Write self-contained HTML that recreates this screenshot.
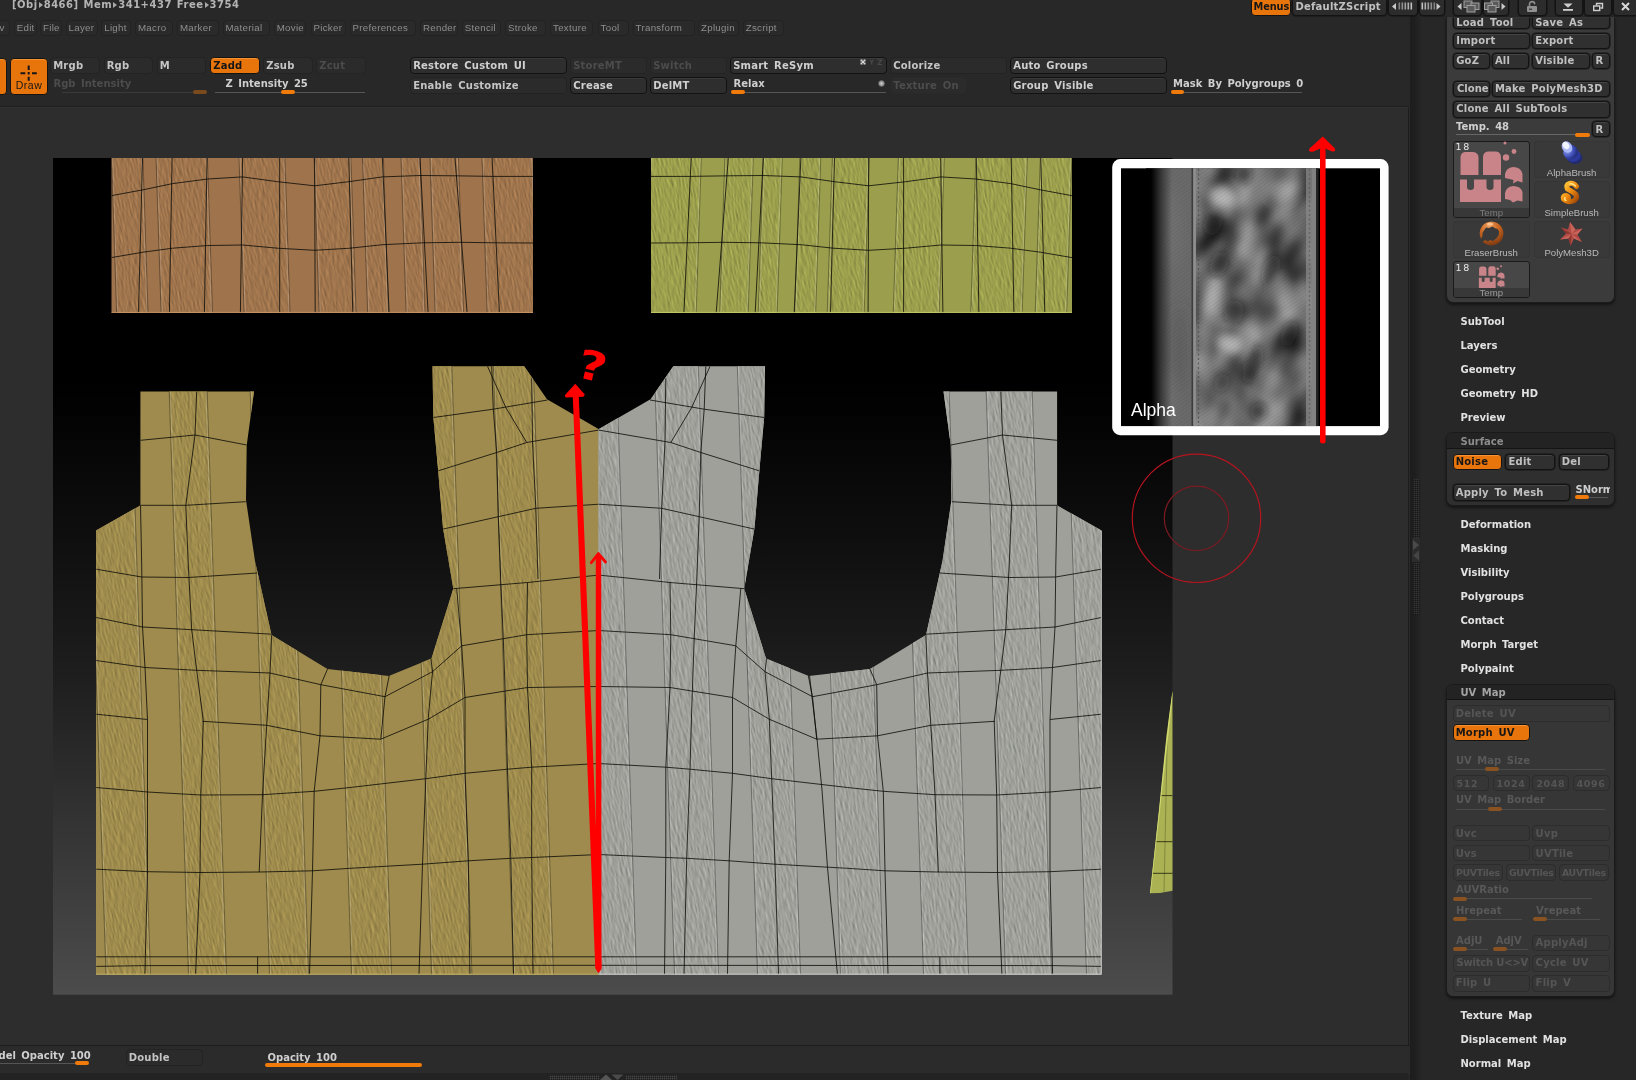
<!DOCTYPE html>
<html lang="en"><head><meta charset="utf-8"><title>ZBrush</title>
<style>
*{box-sizing:border-box;margin:0;padding:0}
html,body{width:1636px;height:1080px;overflow:hidden;background:#2d2d2d}
body{position:relative;font-family:"DejaVu Sans","Liberation Sans",sans-serif;font-size:10px;font-weight:bold;color:#c4c4c4;word-spacing:2px;-webkit-font-smoothing:antialiased}
#root{position:absolute;left:0;top:0;width:1636px;height:1080px;overflow:hidden;will-change:transform}
.a{position:absolute}
.b{position:absolute;border-radius:4px;white-space:nowrap;overflow:hidden;padding-left:2.2px;letter-spacing:.22px}
.b1{background:#2e2e2e;border:1px solid #121212;box-shadow:inset 0 1px 0 #3a3a3a;color:#cfcfcf}
.b2{background:#2b2b2b;border:1px solid #232323;color:#c4c4c4}
.b3{background:#2b2b2b;border:1px solid #242424;color:#4c4c4c}
.bo{background:#e8740c;border:1px solid #141414;color:#161616;box-shadow:inset 0 1px 0 #f59332}
.p1{background:#303030;border:1px solid #131313;box-shadow:inset 0 1px 0 #444,0 0 0 .8px rgba(12,12,12,.5);color:#c0c0c0}
.pd{background:#363636;border:1px solid #2c2c2c;color:#555}
.m{position:absolute;top:20px;height:16px;line-height:14px;border:1px solid #222;border-radius:4px;background:#2a2a2a;color:#8e8e8e;font-family:"Liberation Sans",sans-serif;font-weight:normal;font-size:9.7px;padding-left:2px;white-space:nowrap;word-spacing:0;letter-spacing:.3px}
.tr{display:inline-block;width:0;height:0;border-left:4.5px solid #a8a8a8;border-top:3.5px solid transparent;border-bottom:3.5px solid transparent;margin:0 1px 0 1px}
.t{position:absolute;white-space:nowrap;line-height:12px}
.sl{position:absolute;height:1px;background:#555}
.th{position:absolute;height:4px;border-radius:2px;background:#f07a0a}
.thd{background:#7a4a1c}
.it{position:absolute;left:1460.5px;color:#e2e2e2;white-space:nowrap;line-height:12px}
.lb{position:absolute;font-family:"Liberation Sans",sans-serif;font-weight:normal;font-size:9.6px;color:#b8b8b8;text-align:center;word-spacing:0;white-space:nowrap;line-height:11px}
</style></head>
<body>
<div id="root">
<div class="a" style="left:0;top:0;width:1636px;height:106px;background:#282828"></div>
<div class="a" style="left:0;top:106px;width:1408px;height:1px;background:#1d1d1d"></div>
<div class="a" style="left:0;top:107px;width:1408px;height:1px;background:#333"></div>
<div class="a" style="left:1408px;top:16px;width:228px;height:1064px;background:#272727"></div>
<div class="a" style="left:1410px;top:16px;width:12px;height:1064px;background:linear-gradient(90deg,#1d1d1d 0,#1e1e1e 35%,#272727 100%)"></div>
<div class="a" style="left:1408px;top:107px;width:1px;height:938px;background:#1d1d1d"></div>
<div class="a" style="left:1409px;top:107px;width:1px;height:938px;background:#2a2a2a"></div>
<div class="a" style="left:0;top:1045px;width:1410px;height:1px;background:#1c1c1c"></div>
<div class="a" style="left:0;top:1046px;width:1410px;height:28px;background:#2b2b2b"></div>
<div class="a" style="left:0;top:1073px;width:1408px;height:7px;background:#232323"></div>
<div class="t" style="left:12px;top:-1.5px;color:#b4b4b4;font-size:10px;letter-spacing:.5px;word-spacing:1px">[Obj<span class="tr"></span>8466] Mem<span class="tr"></span>341+437 Free<span class="tr"></span>3754</div>
<div class="m" style="left:-8px;width:17.5px;padding-left:6.5px">v</div>
<div class="m" style="left:13.7px;width:23.8px">Edit</div>
<div class="m" style="left:40px;width:21.5px">File</div>
<div class="m" style="left:65.5px;width:32.5px">Layer</div>
<div class="m" style="left:101.2px;width:29.999999999999986px">Light</div>
<div class="m" style="left:135px;width:37.69999999999999px">Macro</div>
<div class="m" style="left:177px;width:41.69999999999999px">Marker</div>
<div class="m" style="left:222.5px;width:47.5px">Material</div>
<div class="m" style="left:273.7px;width:32.80000000000001px">Movie</div>
<div class="m" style="left:310.5px;width:35.69999999999999px">Picker</div>
<div class="m" style="left:349.5px;width:66.80000000000001px">Preferences</div>
<div class="m" style="left:420px;width:38px">Render</div>
<div class="m" style="left:461.8px;width:39.5px">Stencil</div>
<div class="m" style="left:505px;width:41.299999999999955px">Stroke</div>
<div class="m" style="left:550px;width:43.200000000000045px">Texture</div>
<div class="m" style="left:597.6px;width:31.299999999999955px">Tool</div>
<div class="m" style="left:632.6px;width:62.10000000000002px">Transform</div>
<div class="m" style="left:698px;width:41px">Zplugin</div>
<div class="m" style="left:742.7px;width:41.299999999999955px">Zscript</div>
<div class="a bo" style="left:-4px;top:57.5px;width:11px;height:37px;border-radius:4px"></div>
<div class="a bo" style="left:10px;top:57.500px;width:38px;height:37.500px;border-radius:4px"></div>
<svg class="a" style="left:10.5px;top:57.5px" width="37" height="37" viewBox="0 0 37 37"><g stroke="#161616" stroke-width="2" fill="none"><path d="M17.700 7.500v4.500M17.700 14v2.600M17.700 18.800v4M9.500 15.300h4.800M16.700 15.300h2M21 15.300h4.800"/></g></svg>
<div class="lb" style="left:10.5px;top:79.5px;width:37px;color:#161616;font-size:10.500px;letter-spacing:.5px">Draw</div>
<div class="b b2" style="left:50px;top:57px;width:50.0px;height:17.0px;line-height:15.4px;">Mrgb</div>
<div class="b b2" style="left:103.5px;top:57px;width:49.5px;height:17.0px;line-height:15.4px;">Rgb</div>
<div class="b b2" style="left:156.5px;top:57px;width:49.5px;height:17.0px;line-height:15.4px;">M</div>
<div class="b bo" style="left:210px;top:57px;width:50.0px;height:17.0px;line-height:15.4px;">Zadd</div>
<div class="b b2" style="left:263px;top:57px;width:50.0px;height:17.0px;line-height:15.4px;">Zsub</div>
<div class="b b3" style="left:316px;top:57px;width:50.0px;height:17.0px;line-height:15.4px;">Zcut</div>
<div class="t" style="left:53.5px;top:77.5px;color:#4c4c4c">Rgb Intensity</div>
<div class="sl" style="left:62px;top:91.5px;width:145px;background:#3a3a3a"></div>
<div class="th thd" style="left:193px;top:90px;width:14px"></div>
<div class="t" style="left:225.5px;top:77.5px;color:#cfcfcf">Z Intensity 25</div>
<div class="sl" style="left:215px;top:91.5px;width:150px"></div>
<div class="th" style="left:281px;top:90px;width:14px"></div>
<div class="b b1" style="left:410px;top:57px;width:157.0px;height:17.0px;line-height:15.4px;">Restore Custom UI</div>
<div class="b b2" style="left:410px;top:77px;width:157.0px;height:17.0px;line-height:15.4px;">Enable Customize</div>
<div class="b b3" style="left:570px;top:57px;width:77.0px;height:17.0px;line-height:15.4px;">StoreMT</div>
<div class="b b1" style="left:570px;top:77px;width:77.0px;height:17.0px;line-height:15.4px;">Crease</div>
<div class="b b3" style="left:650px;top:57px;width:77.0px;height:17.0px;line-height:15.4px;">Switch</div>
<div class="b b1" style="left:650px;top:77px;width:77.0px;height:17.0px;line-height:15.4px;">DelMT</div>
<div class="b b1" style="left:730px;top:57px;width:157.0px;height:17.0px;line-height:15.4px;">Smart ReSym</div>
<div class="t" style="left:733.5px;top:77.5px;color:#cfcfcf">Relax</div>
<div class="sl" style="left:731px;top:91.5px;width:155px"></div>
<div class="th" style="left:731px;top:90px;width:14px"></div>
<svg class="a" style="left:860px;top:58.5px" width="24" height="8" viewBox="0 0 24 8"><g fill="#d8d8d8"><rect x="0.5" y="0.5" width="2" height="2"/><rect x="3.5" y="0.5" width="2" height="2"/><rect x="2" y="2" width="2" height="2"/><rect x="0.5" y="3.5" width="2" height="2"/><rect x="3.5" y="3.5" width="2" height="2"/></g><g fill="#4a4a4a"><path d="M9.5 .5h1.2l1 1.8 1-1.8h1.2l-1.6 2.8v2.2h-1.2v-2.2zM17.5 .5h4.5v1l-3 3.4h3v1.1h-4.5v-1l3-3.4h-3z"/></g></svg>
<div class="b b2" style="left:890px;top:57px;width:117.0px;height:17.0px;line-height:15.4px;">Colorize</div>
<div class="a" style="left:877.5px;top:80px;width:7px;height:7px;border-radius:4px;background:radial-gradient(circle,#d0d0d0 0,#909090 45%,#333 75%)"></div>
<div class="b b3" style="left:890px;top:77px;width:77.0px;height:17.0px;line-height:15.4px;border-color:#292929">Texture On</div>
<div class="b b1" style="left:1010px;top:57px;width:157.0px;height:17.0px;line-height:15.4px;">Auto Groups</div>
<div class="b b1" style="left:1010px;top:77px;width:157.0px;height:17.0px;line-height:15.4px;">Group Visible</div>
<div class="t" style="left:1173px;top:77.5px;color:#cfcfcf">Mask By Polygroups 0</div>
<div class="sl" style="left:1172px;top:91.5px;width:130px"></div>
<div class="th" style="left:1171px;top:90px;width:13px"></div>
<div class="b bo" style="left:1250.5px;top:-2px;width:40.0px;height:18.0px;line-height:16.4px;padding-left:2px;border-radius:4px;letter-spacing:-.1px;font-size:9.800px">Menus</div>
<div class="b p1" style="left:1292px;top:-2px;width:94.5px;height:17.5px;line-height:15.9px;padding-left:2.5px;background:#2c2c2c">DefaultZScript</div>
<div class="a p1" style="left:1388px;top:-3px;width:29.5px;height:18.5px;border-radius:4px;background:#2c2c2c"></div>
<div class="a p1" style="left:1418.5px;top:-3px;width:26.0px;height:18.5px;border-radius:4px;background:#2c2c2c"></div>
<div class="a p1" style="left:1453px;top:-3px;width:29px;height:18.5px;border-radius:4px;background:#2c2c2c"></div>
<div class="a p1" style="left:1483px;top:-3px;width:26px;height:18.5px;border-radius:4px;background:#2c2c2c"></div>
<div class="a p1" style="left:1518px;top:-3px;width:28.5px;height:18.5px;border-radius:4px;background:#2c2c2c"></div>
<div class="a p1" style="left:1555px;top:-3px;width:27.5px;height:18.5px;border-radius:4px;background:#2c2c2c"></div>
<div class="a p1" style="left:1583.5px;top:-3px;width:28.0px;height:18.5px;border-radius:4px;background:#2c2c2c"></div>
<div class="a p1" style="left:1612.5px;top:-3px;width:27.5px;height:18.5px;border-radius:4px;background:#2c2c2c"></div>
<svg class="a" style="left:1388px;top:0" width="248" height="16" viewBox="1388 0 248 16"><g fill="#c8c8c8"><path d="M1392 6.5l4-3.5v7z"/><rect x="1398.5" y="2.5" width="1.6" height="7" opacity="0.55"/><rect x="1401.5" y="2.5" width="1.6" height="7" opacity="0.65"/><rect x="1404.5" y="2.5" width="1.6" height="7" opacity="0.75"/><rect x="1407.5" y="2.5" width="1.6" height="7" opacity="0.8500000000000001"/><rect x="1410.5" y="2.5" width="1.6" height="7" opacity="0.9500000000000001"/><rect x="1421.5" y="2.5" width="1.6" height="7" opacity="0.95"/><rect x="1424.5" y="2.5" width="1.6" height="7" opacity="0.85"/><rect x="1427.5" y="2.5" width="1.6" height="7" opacity="0.75"/><rect x="1430.5" y="2.5" width="1.6" height="7" opacity="0.6499999999999999"/><rect x="1433.5" y="2.5" width="1.6" height="7" opacity="0.5499999999999999"/><path d="M1440.5 6.5l-4-3.5v7z"/><path d="M1457.5 6.5l4-3.5v7z"/><path d="M1505.5 6.5l-4-3.5v7z"/></g><g fill="#5a5a5a" stroke="#a0a0a0" stroke-width="1"><rect x="1464" y="1" width="8" height="6.5"/><rect x="1471" y="3" width="8" height="6.5"/><rect x="1467" y="5.5" width="8" height="6.5"/><rect x="1491" y="1" width="8" height="6.5"/><rect x="1484.5" y="3" width="8" height="6.5"/><rect x="1488" y="5.5" width="8" height="6.5"/></g><path d="M1529.5 6V4.2a2.6 2.6 0 0 1 5.2 0" fill="none" stroke="#8c8c8c" stroke-width="1.600"/><rect x="1527" y="6" width="10" height="6" rx="1" fill="#909090"/><rect x="1529" y="8.500" width="3" height="1.500" fill="#444"/><path d="M1563.5 3.5h9l-4.5 4.2z" fill="#cfcfcf"/><rect x="1563" y="9" width="10" height="1.8" fill="#cfcfcf"/><g fill="none" stroke="#cfcfcf" stroke-width="1.4"><path d="M1596.5 5.5v-2h6v4.5h-2"/><rect x="1593.7" y="6" width="6" height="4.5"/></g><path d="M1622 3l7 7M1629 3l-7 7" stroke="#d8d8d8" stroke-width="2" fill="none"/></svg>
<div class="a" style="left:1412.5px;top:479px;width:7px;height:136px;background:#353535;background-image:repeating-linear-gradient(0deg,rgba(0,0,0,.35) 0 1px,transparent 1px 2px),repeating-linear-gradient(90deg,rgba(0,0,0,.3) 0 1px,transparent 1px 2px)"></div>
<div class="a" style="left:1412px;top:538px;width:8px;height:24px;background:#2c2c2c"></div>
<svg class="a" style="left:1412px;top:538px" width="8" height="24" viewBox="0 0 8 24"><path d="M1 2l6 5-6 5z" fill="#4a4a4a"/><path d="M7 12.5l-6 5 6 5z" fill="#444"/></svg>
<div class="a" style="left:1445.700px;top:17px;width:169.800px;height:286px;background:#3b3b3b;border:1px solid #1c1c1c;border-top:none;border-radius:0 0 7px 7px;box-shadow:0 2px 3px rgba(0,0,0,.5)"></div>
<div class="b p1" style="left:1453px;top:12px;width:76.5px;height:17.0px;line-height:15.4px;line-height:19.500px;clip-path:inset(5.500px -2px -2px -2px)">Load Tool</div>
<div class="b p1" style="left:1532px;top:12px;width:77.8px;height:17.0px;line-height:15.4px;line-height:19.500px;clip-path:inset(5.500px -2px -2px -2px)">Save As</div>
<div class="b p1" style="left:1453px;top:32.5px;width:76.5px;height:16.5px;line-height:14.9px;">Import</div>
<div class="b p1" style="left:1532px;top:32.5px;width:77.8px;height:16.5px;line-height:14.9px;">Export</div>
<div class="b p1" style="left:1453px;top:52.5px;width:36.5px;height:16.5px;line-height:14.9px;">GoZ</div>
<div class="b p1" style="left:1491.7px;top:52.5px;width:37.8px;height:16.5px;line-height:14.9px;">All</div>
<div class="b p1" style="left:1532px;top:52.5px;width:57.5px;height:16.5px;line-height:14.9px;">Visible</div>
<div class="b p1" style="left:1592.3px;top:52.5px;width:17.5px;height:16.5px;line-height:14.9px;">R</div>
<div class="b p1" style="left:1453px;top:80.5px;width:36.5px;height:16.5px;line-height:14.9px;padding-left:3px;letter-spacing:0">Clone</div>
<div class="b p1" style="left:1491.7px;top:80.5px;width:118.1px;height:16.5px;line-height:14.9px;">Make PolyMesh3D</div>
<div class="b p1" style="left:1453px;top:101px;width:156.8px;height:16.5px;line-height:14.9px;">Clone All SubTools</div>
<div class="t" style="left:1456px;top:120.5px;color:#cfcfcf">Temp. 48</div>
<div class="sl" style="left:1456px;top:134px;width:134px;background:#666"></div>
<div class="th" style="left:1575px;top:132.5px;width:14.5px"></div>
<div class="b p1" style="left:1592.3px;top:120.5px;width:17.5px;height:16.8px;line-height:15.2px;">R</div>
<div class="a" style="left:1452.5px;top:140.5px;width:77.5px;height:77px;background:#474747;border:1px solid #1a1a1a;border-radius:3px;overflow:hidden"><div class="a" style="left:0;top:66.5px;width:78px;height:11px;background:#383838"></div></div>
<svg class="a" style="left:1452.5px;top:140.5px" width="78" height="68" viewBox="0 0 78 68"><g fill="#c88488"><path d="M7.5 34V16.5q0-5 4.5-5.5h8q5.5 .5 5.5 5.5V34z"/><path d="M30 34V16.5q0-5.5 5-6h8q5 .5 5 6V34z"/><path d="M7 61V38.5h7v7.5q0 3 3.5 3t3.500-3V38.500h12.500V46q0 3 3.500 3t3.500-3V38.500H48V61z"/><circle cx="53" cy="16.500" r="3.200"/><circle cx="61" cy="10.500" r="2.400"/><circle cx="52" cy="2" r="1.500"/><path d="M52 37V33q1-6 8-7 8 0 9.500 7v8.500l-5-1.500-4.500 2.500 .5-3.500z"/><path d="M52 58V52q1-6 8-7 8 0 9.500 6v9.500l-5-1-4.500 2-3-2.500z"/></g></svg>
<div class="t" style="left:1455.5px;top:141px;color:#e8e8e8;font-weight:normal;font-size:9.500px;letter-spacing:1.600px">18</div>
<div class="lb" style="left:1452.5px;top:207px;width:77.5px;color:#7c7c7c">Temp</div>
<div class="a" style="left:1533.5px;top:140.5px;width:76.29999999999995px;height:37.0px;background:#393939;border:1px solid #353535;border-radius:3px"></div>
<div class="lb" style="left:1529.5px;top:166.7px;width:84.29999999999995px">AlphaBrush</div>
<div class="a" style="left:1533.5px;top:180.5px;width:76.29999999999995px;height:37.0px;background:#393939;border:1px solid #353535;border-radius:3px"></div>
<div class="lb" style="left:1529.5px;top:206.7px;width:84.29999999999995px">SimpleBrush</div>
<div class="a" style="left:1452.5px;top:221px;width:77.29999999999995px;height:36.5px;background:#393939;border:1px solid #353535;border-radius:3px"></div>
<div class="lb" style="left:1448.5px;top:246.7px;width:85.29999999999995px">EraserBrush</div>
<div class="a" style="left:1533.5px;top:221px;width:76.29999999999995px;height:36.5px;background:#393939;border:1px solid #353535;border-radius:3px"></div>
<div class="lb" style="left:1529.5px;top:246.7px;width:84.29999999999995px">PolyMesh3D</div>
<svg class="a" style="left:1555px;top:139px" width="32" height="28" viewBox="0 0 32 28"><defs><radialGradient id="ab" cx=".35" cy=".3" r=".8"><stop offset="0" stop-color="#8fa0f0"/><stop offset=".6" stop-color="#3848b0"/><stop offset="1" stop-color="#1c2460"/></radialGradient></defs><ellipse cx="20" cy="19" rx="7.5" ry="6" fill="#222a70"/><ellipse cx="18" cy="16.500" rx="7.500" ry="6.500" fill="#2c389c"/><ellipse cx="15.500" cy="13" rx="7.500" ry="7" fill="url(#ab)" transform="rotate(-30 15.500 13)"/><ellipse cx="12" cy="8" rx="5" ry="6" fill="#aab8f8" transform="rotate(-35 12 8)"/><ellipse cx="11" cy="6.500" rx="3" ry="4" fill="#f0f4ff" transform="rotate(-35 11 6.500)"/></svg>
<svg class="a" style="left:1557px;top:180px" width="28" height="26" viewBox="0 0 28 26"><defs><linearGradient id="sg" x1="0" y1="0" x2="1" y2="1"><stop offset="0" stop-color="#ffd040"/><stop offset=".5" stop-color="#f08c10"/><stop offset="1" stop-color="#a04808"/></linearGradient></defs><path d="M19.500 6.500q-3-4-7-3t-2 5.500q5 2.500 8.500 5.500 2 4-2.500 6.500-6 2-10-2-1-3.500 2.500-3.500 2.500 .5 2.500 2.500" fill="none" stroke="url(#sg)" stroke-width="5" stroke-linecap="round"/><path d="M18.500 6q-3-3-6-2M8 17.500q-1 2 1 3" fill="none" stroke="#ffe890" stroke-width="1.300" stroke-linecap="round"/></svg>
<svg class="a" style="left:1477px;top:220px" width="30" height="28" viewBox="0 0 30 28"><defs><radialGradient id="eg" cx=".4" cy=".2" r=".9"><stop offset="0" stop-color="#f0a060"/><stop offset=".45" stop-color="#c86420"/><stop offset="1" stop-color="#6a3010"/></radialGradient></defs><path d="M14.500 1.500a12 12 0 1 1-9 20l3-1.500 2.500 1.500 2-1.500 3 1 2.500-2q4-3 3.500-7.500-1-3.500-3.500-3l-3-2-3.500 1.500-3-.5-2 3q-2 2-1.500 5.500l-1.500 3A12 12 0 0 1 14.500 1.500z" fill="url(#eg)"/><ellipse cx="13" cy="4" rx="3" ry="1.500" fill="#ffd0a0" opacity=".8"/></svg>
<svg class="a" style="left:1558px;top:221px" width="28" height="26" viewBox="0 0 28 26"><path d="M12 1 L17.5 8.5 L24.5 7.5 L19.5 13.5 L24 21 L16 17.5 L12.5 25 L10.5 17.5 L2 18.5 L8 12.5 L3 6.5 L10 8.5z" fill="#b04a44"/><path d="M12 1L13.500 13 17.500 8.500zM24.500 7.500L13.500 13 19.500 13.500zM24 21L13.500 13 16 17.500zM2 18.500L13.500 13 10.500 17.500z" fill="#d06a60" opacity=".8"/><path d="M12.500 25L13.500 13 10.500 17.500zM3 6.500L13.500 13 8 12.500z" fill="#7a2c28" opacity=".7"/></svg>
<div class="a" style="left:1452.5px;top:261px;width:77.5px;height:36.500px;background:#474747;border:1px solid #1a1a1a;border-radius:3px;overflow:hidden"><div class="a" style="left:0;top:26px;width:78px;height:11px;background:#383838"></div></div>
<svg class="a" style="left:1476px;top:262px" width="32" height="26" viewBox="0 0 78 64" preserveAspectRatio="none"><g fill="#c88488"><path d="M7.500 34V16.500q0-5 4.500-5.500h8q5.500 .5 5.500 5.500V34z"/><path d="M30 34V16.500q0-5.500 5-6h8q5 .5 5 6V34z"/><path d="M7 64V38.500h7v7.500q0 3 3.500 3t3.500-3V38.500h12.500V46q0 3 3.500 3t3.500-3V38.500H48V64z"/><circle cx="53" cy="16.500" r="3.200"/><circle cx="61" cy="10.500" r="2.400"/><path d="M52 37V33q1-6 8-7 8 0 9.500 7v8.500l-5-1.500-4.500 2.500 .5-3.500z"/><path d="M52 58V52q1-6 8-7 8 0 9.500 6v9.500l-5-1-4.500 2-3-2.500z"/></g></svg>
<div class="t" style="left:1455.5px;top:261.500px;color:#e8e8e8;font-weight:normal;font-size:9.500px;letter-spacing:1.600px">18</div>
<div class="lb" style="left:1452.5px;top:287px;width:77.500px;color:#9a9a9a">Temp</div>
<div class="it" style="top:315.9px">SubTool</div>
<div class="it" style="top:340.1px">Layers</div>
<div class="it" style="top:364.1px">Geometry</div>
<div class="it" style="top:388.1px">Geometry HD</div>
<div class="it" style="top:412.0px">Preview</div>
<div class="a" style="left:1445.700px;top:432.300px;width:169.800px;height:74.200px;background:#2f2f2f;border:1px solid #1a1a1a;border-radius:7px;box-shadow:0 2px 3px rgba(0,0,0,.45);overflow:hidden"><div class="a" style="left:0;top:0;width:170px;height:15.500px;background:#232323;border-bottom:1px solid #141414"></div></div>
<div class="it" style="top:436.300px;color:#8c8c8c">Surface</div>
<div class="b bo" style="left:1452.5px;top:454px;width:49.8px;height:16.3px;line-height:14.7px;">Noise</div>
<div class="b p1" style="left:1505.3px;top:454px;width:50.2px;height:16.3px;line-height:14.7px;">Edit</div>
<div class="b p1" style="left:1558.5px;top:454px;width:50.3px;height:16.3px;line-height:14.7px;">Del</div>
<div class="b p1" style="left:1452.5px;top:483.7px;width:117.0px;height:16.9px;line-height:15.3px;">Apply To Mesh</div>
<div class="t" style="left:1575.5px;top:483.500px;color:#cfcfcf;width:34px;overflow:hidden">SNormal</div>
<div class="sl" style="left:1575px;top:497px;width:33px;background:#555"></div>
<div class="th" style="left:1574.500px;top:495.300px;width:14px"></div>
<div class="it" style="top:518.9px">Deformation</div>
<div class="it" style="top:543.0px">Masking</div>
<div class="it" style="top:567.0px">Visibility</div>
<div class="it" style="top:591.0px">Polygroups</div>
<div class="it" style="top:615.0px">Contact</div>
<div class="it" style="top:639.0px">Morph Target</div>
<div class="it" style="top:663.0px">Polypaint</div>
<div class="a" style="left:1445.700px;top:683.500px;width:169.800px;height:313.500px;background:#363636;border:1px solid #1a1a1a;border-radius:7px;box-shadow:0 2px 3px rgba(0,0,0,.45);overflow:hidden"><div class="a" style="left:0;top:0;width:170px;height:15.500px;background:#232323;border-bottom:1px solid #141414"></div></div>
<div class="it" style="top:687.300px;color:#a4a4a4">UV Map</div>
<div class="b pd" style="left:1452.5px;top:704.5px;width:157.3px;height:17.3px;line-height:15.7px;">Delete UV</div>
<div class="b bo" style="left:1452.5px;top:724.4px;width:77.3px;height:17.1px;line-height:15.5px;">Morph UV</div>
<div class="t" style="left:1456px;top:754.5px;color:#585858">UV Map Size</div>
<div class="sl" style="left:1456px;top:768.5px;width:149px;background:#4a4a4a"></div>
<div class="th thd" style="left:1485px;top:766.8px;width:14px;background:#8a5220"></div>
<div class="b pd" style="left:1452.5px;top:774.7px;width:36.8px;height:16.8px;line-height:15.2px;letter-spacing:.6px;padding-left:3px;font-size:9.500px">512</div>
<div class="b pd" style="left:1492.5px;top:774.7px;width:37.0px;height:16.8px;line-height:15.2px;letter-spacing:.6px;padding-left:3px;font-size:9.500px">1024</div>
<div class="b pd" style="left:1532.4px;top:774.7px;width:37.1px;height:16.8px;line-height:15.2px;letter-spacing:.6px;padding-left:3px;font-size:9.500px">2048</div>
<div class="b pd" style="left:1572.5px;top:774.7px;width:37.3px;height:16.8px;line-height:15.2px;letter-spacing:.6px;padding-left:3px;font-size:9.500px">4096</div>
<div class="t" style="left:1456px;top:794.1px;color:#585858">UV Map Border</div>
<div class="sl" style="left:1456px;top:808.5px;width:149px;background:#4a4a4a"></div>
<div class="th thd" style="left:1488px;top:806.8px;width:14px;background:#8a5220"></div>
<div class="b pd" style="left:1452.5px;top:824.6px;width:77.3px;height:16.9px;line-height:15.3px;">Uvc</div>
<div class="b pd" style="left:1532.4px;top:824.6px;width:77.4px;height:16.9px;line-height:15.3px;">Uvp</div>
<div class="b pd" style="left:1452.5px;top:844.6px;width:77.3px;height:16.8px;line-height:15.2px;">Uvs</div>
<div class="b pd" style="left:1532.4px;top:844.6px;width:77.4px;height:16.8px;line-height:15.2px;">UVTile</div>
<div class="b pd" style="left:1452.5px;top:864.4px;width:50.0px;height:16.8px;line-height:15.2px;padding-left:2.500px;letter-spacing:-.35px;font-size:9.400px">PUVTiles</div>
<div class="b pd" style="left:1505.5px;top:864.4px;width:50.0px;height:16.8px;line-height:15.2px;padding-left:2.500px;letter-spacing:-.35px;font-size:9.400px">GUVTiles</div>
<div class="b pd" style="left:1558.5px;top:864.4px;width:50.8px;height:16.8px;line-height:15.2px;padding-left:2.500px;letter-spacing:-.35px;font-size:9.400px">AUVTiles</div>
<div class="t" style="left:1456px;top:884.3px;color:#585858">AUVRatio</div>
<div class="sl" style="left:1454px;top:898.3px;width:138px;background:#4a4a4a"></div>
<div class="th thd" style="left:1452.5px;top:896.5999999999999px;width:14px;background:#8a5220"></div>
<div class="t" style="left:1456px;top:904.5px;color:#585858">Hrepeat</div>
<div class="sl" style="left:1454px;top:918.7px;width:68px;background:#4a4a4a"></div>
<div class="th thd" style="left:1452.5px;top:917.0px;width:14px;background:#8a5220"></div>
<div class="t" style="left:1536px;top:904.5px;color:#585858">Vrepeat</div>
<div class="sl" style="left:1534px;top:918.7px;width:66px;background:#4a4a4a"></div>
<div class="th thd" style="left:1532.8px;top:917.0px;width:14px;background:#8a5220"></div>
<div class="t" style="left:1456px;top:934.5px;color:#585858">AdjU</div>
<div class="sl" style="left:1454px;top:948.6px;width:34px;background:#4a4a4a"></div>
<div class="th thd" style="left:1452.5px;top:946.9px;width:14px;background:#8a5220"></div>
<div class="t" style="left:1495.7px;top:934.5px;color:#585858">AdjV</div>
<div class="sl" style="left:1494px;top:948.6px;width:34px;background:#4a4a4a"></div>
<div class="th thd" style="left:1492.7px;top:946.9px;width:14px;background:#8a5220"></div>
<div class="b pd" style="left:1532.4px;top:935.4px;width:77.4px;height:16.1px;line-height:14.5px;">ApplyAdj</div>
<div class="b pd" style="left:1452.5px;top:955px;width:77.3px;height:16.5px;line-height:14.9px;padding-left:3px;letter-spacing:-.2px;word-spacing:0">Switch U&lt;&gt;V</div>
<div class="b pd" style="left:1532.4px;top:955px;width:77.4px;height:16.5px;line-height:14.9px;">Cycle UV</div>
<div class="b pd" style="left:1452.5px;top:975px;width:77.3px;height:16.5px;line-height:14.9px;">Flip U</div>
<div class="b pd" style="left:1532.4px;top:975px;width:77.4px;height:16.5px;line-height:14.9px;">Flip V</div>
<div class="it" style="top:1010.2px">Texture Map</div>
<div class="it" style="top:1034.1px">Displacement Map</div>
<div class="it" style="top:1058.1px">Normal Map</div>
<svg class="a" style="left:0;top:0" width="1636" height="1080" viewBox="0 0 1636 1080"><defs><linearGradient id="cbg" x1="0" y1="0" x2="0" y2="1"><stop offset="0" stop-color="#000"/><stop offset=".27" stop-color="#000"/><stop offset=".45" stop-color="#0e0e0e"/><stop offset=".62" stop-color="#1e1e1e"/><stop offset=".8" stop-color="#343434"/><stop offset="1" stop-color="#4c4c4c"/></linearGradient><filter id="fbr" filterUnits="userSpaceOnUse" x="-200" y="100" width="1500" height="950" color-interpolation-filters="sRGB"><feTurbulence type="fractalNoise" baseFrequency="0.7 0.09" numOctaves="2" seed="100" result="n"/><feDiffuseLighting in="n" surfaceScale="0.36" diffuseConstant="1" lighting-color="rgb(224,164,108)" result="l"><feDistantLight azimuth="180" elevation="45"/></feDiffuseLighting><feComposite in="l" in2="SourceAlpha" operator="in"/></filter><filter id="fgn" filterUnits="userSpaceOnUse" x="-200" y="100" width="1500" height="950" color-interpolation-filters="sRGB"><feTurbulence type="fractalNoise" baseFrequency="0.7 0.09" numOctaves="2" seed="105" result="n"/><feDiffuseLighting in="n" surfaceScale="0.36" diffuseConstant="1" lighting-color="rgb(219,224,108)" result="l"><feDistantLight azimuth="180" elevation="45"/></feDiffuseLighting><feComposite in="l" in2="SourceAlpha" operator="in"/></filter><filter id="ftn" filterUnits="userSpaceOnUse" x="-200" y="100" width="1500" height="950" color-interpolation-filters="sRGB"><feTurbulence type="fractalNoise" baseFrequency="0.7 0.09" numOctaves="2" seed="118" result="n"/><feDiffuseLighting in="n" surfaceScale="0.36" diffuseConstant="1" lighting-color="rgb(223,196,108)" result="l"><feDistantLight azimuth="180" elevation="45"/></feDiffuseLighting><feComposite in="l" in2="SourceAlpha" operator="in"/></filter><filter id="fgy" filterUnits="userSpaceOnUse" x="-200" y="100" width="1500" height="950" color-interpolation-filters="sRGB"><feTurbulence type="fractalNoise" baseFrequency="0.7 0.09" numOctaves="2" seed="105" result="n"/><feDiffuseLighting in="n" surfaceScale="0.36" diffuseConstant="1" lighting-color="rgb(224,226,217)" result="l"><feDistantLight azimuth="180" elevation="45"/></feDiffuseLighting><feComposite in="l" in2="SourceAlpha" operator="in"/></filter><clipPath id="cl"><polygon points="140.4,391.5 254.0,391.5 246.7,445.5 246.0,500.0 255.0,561.0 271.5,635.0 327.5,669.0 388.8,676.0 431.5,658.5 453.3,588.7 443.0,528.0 438.0,469.0 433.3,417.0 432.5,366.3 524.2,366.3 547.0,399.3 571.7,413.5 599.0,429.2 599.0,974.5 96.0,974.5 96.0,530.5 140.4,505.3"/></clipPath><clipPath id="cr"><polygon points="1057.1,391.5 943.5,391.5 950.8,445.5 951.5,500.0 942.5,561.0 926.0,635.0 870.0,669.0 808.7,676.0 766.0,658.5 744.2,588.7 754.5,528.0 759.5,469.0 764.2,417.0 765.0,366.3 673.3,366.3 650.5,399.3 625.8,413.5 598.5,429.2 598.5,974.5 1101.5,974.5 1101.5,530.5 1057.1,505.3"/></clipPath><clipPath id="cb"><polygon points="111.5,158.0 533.0,158.0 533.0,312.7 111.5,312.7"/></clipPath><clipPath id="cg"><polygon points="651.0,158.0 1072.0,158.0 1072.0,312.7 651.0,312.7"/></clipPath><clipPath id="cs"><polygon points="1172.5,691.0 1166.5,735.0 1159.0,810.0 1150.0,893.3 1160.0,893.0 1172.5,890.8"/></clipPath><clipPath id="ccv"><rect x="53" y="158" width="1119.5" height="836.7"/></clipPath><filter id="bl3" x="-50%" y="-50%" width="200%" height="200%"><feGaussianBlur stdDeviation="5"/></filter><filter id="bl5" x="-50%" y="-50%" width="200%" height="200%"><feGaussianBlur stdDeviation="7"/></filter><linearGradient id="afade" x1="0" y1="0" x2="1" y2="0"><stop offset="0" stop-color="#000" stop-opacity="1"/><stop offset=".2" stop-color="#000" stop-opacity="1"/><stop offset=".6" stop-color="#000" stop-opacity=".45"/><stop offset="1" stop-color="#000" stop-opacity="0"/></linearGradient><pattern id="hat" width="3" height="3" patternUnits="userSpaceOnUse" patternTransform="rotate(-35)"><rect width="3" height="1" fill="#000" opacity=".06"/></pattern><filter id="fal" filterUnits="userSpaceOnUse" x="1000" y="0" width="500" height="700" color-interpolation-filters="sRGB"><feTurbulence type="fractalNoise" baseFrequency="0.034 0.022" numOctaves="2" seed="23" result="n"/><feColorMatrix in="n" type="matrix" values="0.8 0 0 0 0.01  0.8 0 0 0 0.01  0.8 0 0 0 0.01  0 0 0 0 1" result="g"/><feGaussianBlur in="g" stdDeviation="2.2" result="gb"/><feComposite in="gb" in2="SourceAlpha" operator="in"/></filter><clipPath id="cal2"><rect x="1196" y="160" width="116" height="275"/></clipPath><clipPath id="cal"><rect x="1121" y="168.3" width="259" height="257.8"/></clipPath></defs><rect x="53" y="158" width="1119.5" height="836.7" fill="url(#cbg)"/><polygon points="111.5,158.0 533.0,158.0 533.0,312.7 111.5,312.7" fill="rgb(159,116,77)"/><g clip-path="url(#cb)"><g transform="matrix(1 0 0.1944 1 0 0)" filter="url(#fbr)"><polygon points="82.1,150.0 113.6,150.0 -22.0,990.0 -53.5,990.0"/><polygon points="126.6,150.0 178.1,150.0 42.5,990.0 -9.0,990.0"/><polygon points="209.6,150.0 255.6,150.0 120.0,990.0 74.0,990.0"/><polygon points="284.6,150.0 321.6,150.0 186.0,990.0 149.0,990.0"/><polygon points="333.1,150.0 354.1,150.0 218.5,990.0 197.5,990.0"/><polygon points="371.6,150.0 390.6,150.0 255.0,990.0 236.0,990.0"/><polygon points="400.6,150.0 429.1,150.0 293.5,990.0 265.0,990.0"/><polygon points="452.6,150.0 503.6,150.0 368.0,990.0 317.0,990.0"/></g><line x1="111.2" y1="150" x2="139.0" y2="990" stroke="#000" stroke-opacity=".33" stroke-width="1"/><line x1="112.4" y1="150" x2="140.2" y2="990" stroke="#fff" stroke-opacity=".18" stroke-width="1"/><line x1="142.7" y1="150" x2="170.5" y2="990" stroke="#000" stroke-opacity=".3" stroke-width="1"/><line x1="141.5" y1="150" x2="169.3" y2="990" stroke="#fff" stroke-opacity=".2" stroke-width="1"/><line x1="155.7" y1="150" x2="183.5" y2="990" stroke="#000" stroke-opacity=".33" stroke-width="1"/><line x1="156.9" y1="150" x2="184.7" y2="990" stroke="#fff" stroke-opacity=".18" stroke-width="1"/><line x1="207.2" y1="150" x2="235.0" y2="990" stroke="#000" stroke-opacity=".3" stroke-width="1"/><line x1="206.0" y1="150" x2="233.8" y2="990" stroke="#fff" stroke-opacity=".2" stroke-width="1"/><line x1="238.7" y1="150" x2="266.5" y2="990" stroke="#000" stroke-opacity=".33" stroke-width="1"/><line x1="239.9" y1="150" x2="267.7" y2="990" stroke="#fff" stroke-opacity=".18" stroke-width="1"/><line x1="284.7" y1="150" x2="312.5" y2="990" stroke="#000" stroke-opacity=".3" stroke-width="1"/><line x1="283.5" y1="150" x2="311.3" y2="990" stroke="#fff" stroke-opacity=".2" stroke-width="1"/><line x1="313.7" y1="150" x2="341.5" y2="990" stroke="#000" stroke-opacity=".33" stroke-width="1"/><line x1="314.9" y1="150" x2="342.7" y2="990" stroke="#fff" stroke-opacity=".18" stroke-width="1"/><line x1="350.7" y1="150" x2="378.5" y2="990" stroke="#000" stroke-opacity=".3" stroke-width="1"/><line x1="349.5" y1="150" x2="377.3" y2="990" stroke="#fff" stroke-opacity=".2" stroke-width="1"/><line x1="362.2" y1="150" x2="390.0" y2="990" stroke="#000" stroke-opacity=".33" stroke-width="1"/><line x1="363.4" y1="150" x2="391.2" y2="990" stroke="#fff" stroke-opacity=".18" stroke-width="1"/><line x1="383.2" y1="150" x2="411.0" y2="990" stroke="#000" stroke-opacity=".3" stroke-width="1"/><line x1="382.0" y1="150" x2="409.8" y2="990" stroke="#fff" stroke-opacity=".2" stroke-width="1"/><line x1="400.7" y1="150" x2="428.5" y2="990" stroke="#000" stroke-opacity=".33" stroke-width="1"/><line x1="401.9" y1="150" x2="429.7" y2="990" stroke="#fff" stroke-opacity=".18" stroke-width="1"/><line x1="419.7" y1="150" x2="447.5" y2="990" stroke="#000" stroke-opacity=".3" stroke-width="1"/><line x1="418.5" y1="150" x2="446.3" y2="990" stroke="#fff" stroke-opacity=".2" stroke-width="1"/><line x1="429.7" y1="150" x2="457.5" y2="990" stroke="#000" stroke-opacity=".33" stroke-width="1"/><line x1="430.9" y1="150" x2="458.7" y2="990" stroke="#fff" stroke-opacity=".18" stroke-width="1"/><line x1="458.2" y1="150" x2="486.0" y2="990" stroke="#000" stroke-opacity=".3" stroke-width="1"/><line x1="457.0" y1="150" x2="484.8" y2="990" stroke="#fff" stroke-opacity=".2" stroke-width="1"/><line x1="481.7" y1="150" x2="509.5" y2="990" stroke="#000" stroke-opacity=".33" stroke-width="1"/><line x1="482.9" y1="150" x2="510.7" y2="990" stroke="#fff" stroke-opacity=".18" stroke-width="1"/><line x1="532.7" y1="150" x2="560.5" y2="990" stroke="#000" stroke-opacity=".3" stroke-width="1"/><line x1="531.5" y1="150" x2="559.3" y2="990" stroke="#fff" stroke-opacity=".2" stroke-width="1"/><g fill="none" stroke="#0a0a06" stroke-opacity=".8" stroke-width="1" stroke-linejoin="round"><polyline points="111.3,195.7 143.0,189.8 172.6,183.6 207.6,179.0 242.5,176.9 277.5,181.7 314.6,185.8 348.8,181.7 382.4,176.9 420.0,175.5 455.0,175.8 492.7,176.4 533.0,176.4"/><polyline points="111.3,257.6 143.0,252.2 172.6,248.2 207.6,245.5 242.5,245.0 277.5,248.2 314.6,250.3 350.0,248.2 382.4,244.7 422.7,242.8 460.4,242.3 495.4,242.8 533.0,243.0"/><polyline points="142.5,158.0 138.5,312.7"/><polyline points="172.1,158.0 169.4,312.7"/><polyline points="207.0,158.0 204.4,312.7"/><polyline points="242.6,158.0 240.4,312.7"/><polyline points="279.7,158.0 279.7,312.7"/><polyline points="314.6,158.0 315.2,312.7"/><polyline points="348.8,158.0 352.8,312.7"/><polyline points="382.4,158.0 389.1,312.7"/><polyline points="420.0,158.0 428.1,312.7"/><polyline points="455.0,158.0 467.1,312.7"/><polyline points="492.1,158.0 499.4,312.7"/></g></g><polygon points="651.0,158.0 1072.0,158.0 1072.0,312.7 651.0,312.7" fill="rgb(155,159,77)"/><g clip-path="url(#cg)"><g transform="matrix(1 0 0.1944 1 0 0)" filter="url(#fgn)"><polygon points="1042.9,150.0 1011.4,150.0 820.4,990.0 851.9,990.0"/><polygon points="998.4,150.0 946.9,150.0 755.9,990.0 807.4,990.0"/><polygon points="915.4,150.0 869.4,150.0 678.4,990.0 724.4,990.0"/><polygon points="840.4,150.0 803.4,150.0 612.4,990.0 649.4,990.0"/><polygon points="791.9,150.0 770.9,150.0 579.9,990.0 600.9,990.0"/><polygon points="753.4,150.0 734.4,150.0 543.4,990.0 562.4,990.0"/><polygon points="724.4,150.0 695.9,150.0 504.9,990.0 533.4,990.0"/><polygon points="672.4,150.0 621.4,150.0 430.4,990.0 481.4,990.0"/></g><line x1="1040.6" y1="150" x2="1012.8" y2="990" stroke="#000" stroke-opacity=".33" stroke-width="1"/><line x1="1041.8" y1="150" x2="1014.0" y2="990" stroke="#fff" stroke-opacity=".18" stroke-width="1"/><line x1="1072.1" y1="150" x2="1044.3" y2="990" stroke="#000" stroke-opacity=".3" stroke-width="1"/><line x1="1070.9" y1="150" x2="1043.1" y2="990" stroke="#fff" stroke-opacity=".2" stroke-width="1"/><line x1="976.1" y1="150" x2="948.3" y2="990" stroke="#000" stroke-opacity=".33" stroke-width="1"/><line x1="977.3" y1="150" x2="949.5" y2="990" stroke="#fff" stroke-opacity=".18" stroke-width="1"/><line x1="1027.6" y1="150" x2="999.8" y2="990" stroke="#000" stroke-opacity=".3" stroke-width="1"/><line x1="1026.4" y1="150" x2="998.6" y2="990" stroke="#fff" stroke-opacity=".2" stroke-width="1"/><line x1="898.6" y1="150" x2="870.8" y2="990" stroke="#000" stroke-opacity=".33" stroke-width="1"/><line x1="899.8" y1="150" x2="872.0" y2="990" stroke="#fff" stroke-opacity=".18" stroke-width="1"/><line x1="944.6" y1="150" x2="916.8" y2="990" stroke="#000" stroke-opacity=".3" stroke-width="1"/><line x1="943.4" y1="150" x2="915.6" y2="990" stroke="#fff" stroke-opacity=".2" stroke-width="1"/><line x1="832.6" y1="150" x2="804.8" y2="990" stroke="#000" stroke-opacity=".33" stroke-width="1"/><line x1="833.8" y1="150" x2="806.0" y2="990" stroke="#fff" stroke-opacity=".18" stroke-width="1"/><line x1="869.6" y1="150" x2="841.8" y2="990" stroke="#000" stroke-opacity=".3" stroke-width="1"/><line x1="868.4" y1="150" x2="840.6" y2="990" stroke="#fff" stroke-opacity=".2" stroke-width="1"/><line x1="800.1" y1="150" x2="772.3" y2="990" stroke="#000" stroke-opacity=".33" stroke-width="1"/><line x1="801.3" y1="150" x2="773.5" y2="990" stroke="#fff" stroke-opacity=".18" stroke-width="1"/><line x1="821.1" y1="150" x2="793.3" y2="990" stroke="#000" stroke-opacity=".3" stroke-width="1"/><line x1="819.9" y1="150" x2="792.1" y2="990" stroke="#fff" stroke-opacity=".2" stroke-width="1"/><line x1="763.6" y1="150" x2="735.8" y2="990" stroke="#000" stroke-opacity=".33" stroke-width="1"/><line x1="764.8" y1="150" x2="737.0" y2="990" stroke="#fff" stroke-opacity=".18" stroke-width="1"/><line x1="782.6" y1="150" x2="754.8" y2="990" stroke="#000" stroke-opacity=".3" stroke-width="1"/><line x1="781.4" y1="150" x2="753.6" y2="990" stroke="#fff" stroke-opacity=".2" stroke-width="1"/><line x1="725.1" y1="150" x2="697.3" y2="990" stroke="#000" stroke-opacity=".33" stroke-width="1"/><line x1="726.3" y1="150" x2="698.5" y2="990" stroke="#fff" stroke-opacity=".18" stroke-width="1"/><line x1="753.6" y1="150" x2="725.8" y2="990" stroke="#000" stroke-opacity=".3" stroke-width="1"/><line x1="752.4" y1="150" x2="724.6" y2="990" stroke="#fff" stroke-opacity=".2" stroke-width="1"/><line x1="650.6" y1="150" x2="622.8" y2="990" stroke="#000" stroke-opacity=".33" stroke-width="1"/><line x1="651.8" y1="150" x2="624.0" y2="990" stroke="#fff" stroke-opacity=".18" stroke-width="1"/><line x1="701.6" y1="150" x2="673.8" y2="990" stroke="#000" stroke-opacity=".3" stroke-width="1"/><line x1="700.4" y1="150" x2="672.6" y2="990" stroke="#fff" stroke-opacity=".2" stroke-width="1"/><g fill="none" stroke="#0a0a06" stroke-opacity=".8" stroke-width="1" stroke-linejoin="round"><polyline points="1072.0,195.7 1040.3,189.8 1010.7,183.6 975.7,179.0 940.8,176.9 905.8,181.7 868.7,185.8 834.5,181.7 800.9,176.9 763.3,175.5 728.3,175.8 690.6,176.4 650.3,176.4"/><polyline points="1072.0,257.6 1040.3,252.2 1010.7,248.2 975.7,245.5 940.8,245.0 905.8,248.2 868.7,250.3 833.3,248.2 800.9,244.7 760.6,242.8 722.9,242.3 687.9,242.8 650.3,243.0"/><polyline points="1040.8,158.0 1044.8,312.7"/><polyline points="1011.2,158.0 1013.9,312.7"/><polyline points="976.3,158.0 978.9,312.7"/><polyline points="940.7,158.0 942.9,312.7"/><polyline points="903.6,158.0 903.6,312.7"/><polyline points="868.7,158.0 868.1,312.7"/><polyline points="834.5,158.0 830.5,312.7"/><polyline points="800.9,158.0 794.2,312.7"/><polyline points="763.3,158.0 755.2,312.7"/><polyline points="728.3,158.0 716.2,312.7"/><polyline points="691.2,158.0 683.9,312.7"/></g></g><polygon points="140.4,391.5 254.0,391.5 246.7,445.5 246.0,500.0 255.0,561.0 271.5,635.0 327.5,669.0 388.8,676.0 431.5,658.5 453.3,588.7 443.0,528.0 438.0,469.0 433.3,417.0 432.5,366.3 524.2,366.3 547.0,399.3 571.7,413.5 599.0,429.2 599.0,974.5 96.0,974.5 96.0,530.5 140.4,505.3" fill="rgb(158,139,77)"/><g clip-path="url(#cl)"><g transform="matrix(1 0 0.1944 1 0 0)" filter="url(#ftn)"><polygon points="49.6,150.0 94.1,150.0 -41.5,990.0 -86.0,990.0"/><polygon points="132.1,150.0 170.1,150.0 34.5,990.0 -3.5,990.0"/><polygon points="213.1,150.0 252.1,150.0 116.5,990.0 77.5,990.0"/><polygon points="295.1,150.0 335.1,150.0 199.5,990.0 159.5,990.0"/><polygon points="375.1,150.0 415.6,150.0 280.0,990.0 239.5,990.0"/><polygon points="457.1,150.0 497.1,150.0 361.5,990.0 321.5,990.0"/></g><line x1="78.7" y1="150" x2="106.5" y2="990" stroke="#000" stroke-opacity=".33" stroke-width="1"/><line x1="79.9" y1="150" x2="107.7" y2="990" stroke="#fff" stroke-opacity=".18" stroke-width="1"/><line x1="123.2" y1="150" x2="151.0" y2="990" stroke="#000" stroke-opacity=".3" stroke-width="1"/><line x1="122.0" y1="150" x2="149.8" y2="990" stroke="#fff" stroke-opacity=".2" stroke-width="1"/><line x1="161.2" y1="150" x2="189.0" y2="990" stroke="#000" stroke-opacity=".33" stroke-width="1"/><line x1="162.4" y1="150" x2="190.2" y2="990" stroke="#fff" stroke-opacity=".18" stroke-width="1"/><line x1="199.2" y1="150" x2="227.0" y2="990" stroke="#000" stroke-opacity=".3" stroke-width="1"/><line x1="198.0" y1="150" x2="225.8" y2="990" stroke="#fff" stroke-opacity=".2" stroke-width="1"/><line x1="242.2" y1="150" x2="270.0" y2="990" stroke="#000" stroke-opacity=".33" stroke-width="1"/><line x1="243.4" y1="150" x2="271.2" y2="990" stroke="#fff" stroke-opacity=".18" stroke-width="1"/><line x1="281.2" y1="150" x2="309.0" y2="990" stroke="#000" stroke-opacity=".3" stroke-width="1"/><line x1="280.0" y1="150" x2="307.8" y2="990" stroke="#fff" stroke-opacity=".2" stroke-width="1"/><line x1="324.2" y1="150" x2="352.0" y2="990" stroke="#000" stroke-opacity=".33" stroke-width="1"/><line x1="325.4" y1="150" x2="353.2" y2="990" stroke="#fff" stroke-opacity=".18" stroke-width="1"/><line x1="364.2" y1="150" x2="392.0" y2="990" stroke="#000" stroke-opacity=".3" stroke-width="1"/><line x1="363.0" y1="150" x2="390.8" y2="990" stroke="#fff" stroke-opacity=".2" stroke-width="1"/><line x1="404.2" y1="150" x2="432.0" y2="990" stroke="#000" stroke-opacity=".33" stroke-width="1"/><line x1="405.4" y1="150" x2="433.2" y2="990" stroke="#fff" stroke-opacity=".18" stroke-width="1"/><line x1="444.7" y1="150" x2="472.5" y2="990" stroke="#000" stroke-opacity=".3" stroke-width="1"/><line x1="443.5" y1="150" x2="471.3" y2="990" stroke="#fff" stroke-opacity=".2" stroke-width="1"/><line x1="486.2" y1="150" x2="514.0" y2="990" stroke="#000" stroke-opacity=".33" stroke-width="1"/><line x1="487.4" y1="150" x2="515.2" y2="990" stroke="#fff" stroke-opacity=".18" stroke-width="1"/><line x1="526.2" y1="150" x2="554.0" y2="990" stroke="#000" stroke-opacity=".3" stroke-width="1"/><line x1="525.0" y1="150" x2="552.8" y2="990" stroke="#fff" stroke-opacity=".2" stroke-width="1"/><g fill="none" stroke="#0a0a06" stroke-opacity=".8" stroke-width="1" stroke-linejoin="round"><polyline points="140.5,440.3 195.0,435.0 246.7,445.0"/><polyline points="140.5,505.3 185.8,505.3 245.8,501.7"/><polyline points="96.3,569.2 141.7,577.0 188.3,577.5 257.5,573.0"/><polyline points="96.3,617.5 142.5,627.0 191.7,629.7 271.7,634.2"/><polyline points="96.3,660.5 145.0,667.5 196.7,670.3 270.0,673.0 320.8,684.7 385.0,696.7 432.5,671.7 461.7,645.8 526.7,634.7 599.0,630.5"/><polyline points="96.3,714.2 147.5,719.5"/><polyline points="202.5,721.3 266.7,725.3 320.0,735.8 380.8,739.2 428.3,719.2 465.0,697.5 527.5,687.5 599.0,686.5"/><polyline points="96.3,787.5 147.5,792.0 200.8,795.0 262.5,794.7 314.2,791.3 350.0,787.5 425.8,778.7 465.0,773.3 507.5,769.2 531.7,767.2 599.0,763.5"/><polyline points="96.3,869.2 147.5,871.7 200.0,872.5 260.0,872.0 312.5,870.8 350.0,868.3 422.5,864.2 468.3,860.8 510.8,858.3 531.7,857.5 599.0,854.5"/><polyline points="96.3,956.8 599.0,956.8"/><polyline points="96.3,966.4 144.9,965.6 599.0,965.3"/><polyline points="433.3,417.5 493.3,409.2 547.5,400.0"/><polyline points="438.3,470.8 496.7,452.5 526.7,442.5 599.2,430.0"/><polyline points="442.5,529.2 498.3,516.7 535.8,508.3 599.2,504.2"/><polyline points="453.3,588.7 527.5,582.5 580.0,577.0 599.5,575.0"/><polyline points="140.5,505.3 141.7,565.0 142.5,627.0 145.0,667.5 147.5,719.5 147.5,792.0 147.5,871.7 144.9,974.0"/><polyline points="196.7,391.3 195.0,435.0 185.8,505.3 188.3,565.0 191.7,629.7 196.7,670.3 203.3,720.8 200.8,795.0 200.0,872.5 195.6,974.0"/><polyline points="271.7,634.2 270.0,673.0 266.7,725.3 262.5,794.7 259.2,872.0"/><polyline points="257.6,956.8 257.6,974.0"/><polyline points="327.5,669.2 320.8,684.7 320.0,735.8 314.2,791.3 312.5,870.8 309.5,974.0"/><polyline points="389.2,675.8 385.0,696.7 380.8,739.2"/><polyline points="430.8,657.5 432.5,671.7 428.3,717.5 425.8,778.7 422.5,864.2 419.0,974.0"/><polyline points="456.7,588.3 461.7,645.8 465.0,697.5 465.0,773.3 468.3,860.8 470.0,974.0"/><polyline points="491.7,366.3 493.3,409.2 496.7,452.5 498.3,516.7 500.8,581.7 503.3,638.3 505.8,710.0 507.5,769.2 510.8,858.3 513.5,974.0"/><polyline points="531.7,378.3 532.5,441.7 535.8,508.3 538.0,579.0"/><polyline points="527.5,582.5 526.7,634.7 527.5,687.5 531.7,767.2 531.7,857.5 533.0,974.0"/><polyline points="487.5,366.3 505.8,407.5 526.7,442.5"/></g></g><polygon points="1057.1,391.5 943.5,391.5 950.8,445.5 951.5,500.0 942.5,561.0 926.0,635.0 870.0,669.0 808.7,676.0 766.0,658.5 744.2,588.7 754.5,528.0 759.5,469.0 764.2,417.0 765.0,366.3 673.3,366.3 650.5,399.3 625.8,413.5 598.5,429.2 598.5,974.5 1101.5,974.5 1101.5,530.5 1057.1,505.3" fill="rgb(159,160,154)"/><g clip-path="url(#cr)"><g transform="matrix(1 0 0.1944 1 0 0)" filter="url(#fgy)"><polygon points="536.1,150.0 580.1,150.0 444.5,990.0 400.5,990.0"/><polygon points="618.1,150.0 662.1,150.0 526.5,990.0 482.5,990.0"/><polygon points="701.1,150.0 744.1,150.0 608.5,990.0 565.5,990.0"/><polygon points="784.1,150.0 827.1,150.0 691.5,990.0 648.5,990.0"/><polygon points="867.1,150.0 912.1,150.0 776.5,990.0 731.5,990.0"/><polygon points="949.1,150.0 995.1,150.0 859.5,990.0 813.5,990.0"/><polygon points="1030.1,150.0 1074.1,150.0 938.5,990.0 894.5,990.0"/></g><line x1="565.2" y1="150" x2="593.0" y2="990" stroke="#000" stroke-opacity=".33" stroke-width="1"/><line x1="566.4" y1="150" x2="594.2" y2="990" stroke="#fff" stroke-opacity=".18" stroke-width="1"/><line x1="609.2" y1="150" x2="637.0" y2="990" stroke="#000" stroke-opacity=".3" stroke-width="1"/><line x1="608.0" y1="150" x2="635.8" y2="990" stroke="#fff" stroke-opacity=".2" stroke-width="1"/><line x1="647.2" y1="150" x2="675.0" y2="990" stroke="#000" stroke-opacity=".33" stroke-width="1"/><line x1="648.4" y1="150" x2="676.2" y2="990" stroke="#fff" stroke-opacity=".18" stroke-width="1"/><line x1="691.2" y1="150" x2="719.0" y2="990" stroke="#000" stroke-opacity=".3" stroke-width="1"/><line x1="690.0" y1="150" x2="717.8" y2="990" stroke="#fff" stroke-opacity=".2" stroke-width="1"/><line x1="730.2" y1="150" x2="758.0" y2="990" stroke="#000" stroke-opacity=".33" stroke-width="1"/><line x1="731.4" y1="150" x2="759.2" y2="990" stroke="#fff" stroke-opacity=".18" stroke-width="1"/><line x1="773.2" y1="150" x2="801.0" y2="990" stroke="#000" stroke-opacity=".3" stroke-width="1"/><line x1="772.0" y1="150" x2="799.8" y2="990" stroke="#fff" stroke-opacity=".2" stroke-width="1"/><line x1="813.2" y1="150" x2="841.0" y2="990" stroke="#000" stroke-opacity=".33" stroke-width="1"/><line x1="814.4" y1="150" x2="842.2" y2="990" stroke="#fff" stroke-opacity=".18" stroke-width="1"/><line x1="856.2" y1="150" x2="884.0" y2="990" stroke="#000" stroke-opacity=".3" stroke-width="1"/><line x1="855.0" y1="150" x2="882.8" y2="990" stroke="#fff" stroke-opacity=".2" stroke-width="1"/><line x1="896.2" y1="150" x2="924.0" y2="990" stroke="#000" stroke-opacity=".33" stroke-width="1"/><line x1="897.4" y1="150" x2="925.2" y2="990" stroke="#fff" stroke-opacity=".18" stroke-width="1"/><line x1="941.2" y1="150" x2="969.0" y2="990" stroke="#000" stroke-opacity=".3" stroke-width="1"/><line x1="940.0" y1="150" x2="967.8" y2="990" stroke="#fff" stroke-opacity=".2" stroke-width="1"/><line x1="978.2" y1="150" x2="1006.0" y2="990" stroke="#000" stroke-opacity=".33" stroke-width="1"/><line x1="979.4" y1="150" x2="1007.2" y2="990" stroke="#fff" stroke-opacity=".18" stroke-width="1"/><line x1="1024.2" y1="150" x2="1052.0" y2="990" stroke="#000" stroke-opacity=".3" stroke-width="1"/><line x1="1023.0" y1="150" x2="1050.8" y2="990" stroke="#fff" stroke-opacity=".2" stroke-width="1"/><line x1="1059.2" y1="150" x2="1087.0" y2="990" stroke="#000" stroke-opacity=".33" stroke-width="1"/><line x1="1060.4" y1="150" x2="1088.2" y2="990" stroke="#fff" stroke-opacity=".18" stroke-width="1"/><line x1="1103.2" y1="150" x2="1131.0" y2="990" stroke="#000" stroke-opacity=".3" stroke-width="1"/><line x1="1102.0" y1="150" x2="1129.8" y2="990" stroke="#fff" stroke-opacity=".2" stroke-width="1"/><g fill="none" stroke="#0a0a06" stroke-opacity=".8" stroke-width="1" stroke-linejoin="round"><polyline points="1057.0,440.3 1002.5,435.0 950.8,445.0"/><polyline points="1057.0,505.3 1011.7,505.3 951.7,501.7"/><polyline points="1101.2,569.2 1055.8,577.0 1009.2,577.5 940.0,573.0"/><polyline points="1101.2,617.5 1055.0,627.0 1005.8,629.7 925.8,634.2"/><polyline points="1101.2,660.5 1052.5,667.5 1000.8,670.3 927.5,673.0 876.7,684.7 812.5,696.7 765.0,671.7 735.8,645.8 670.8,634.7 598.5,630.5"/><polyline points="1101.2,714.2 1050.0,719.5"/><polyline points="995.0,721.3 930.8,725.3 877.5,735.8 816.7,739.2 769.2,719.2 732.5,697.5 670.0,687.5 598.5,686.5"/><polyline points="1101.2,787.5 1050.0,792.0 996.7,795.0 935.0,794.7 883.3,791.3 847.5,787.5 771.7,778.7 732.5,773.3 690.0,769.2 665.8,767.2 598.5,763.5"/><polyline points="1101.2,869.2 1050.0,871.7 997.5,872.5 937.5,872.0 885.0,870.8 847.5,868.3 775.0,864.2 729.2,860.8 686.7,858.3 665.8,857.5 598.5,854.5"/><polyline points="1101.2,956.8 598.5,956.8"/><polyline points="1101.2,966.4 1052.6,965.6 598.5,965.3"/><polyline points="764.2,417.5 704.2,409.2 650.0,400.0"/><polyline points="759.2,470.8 700.8,452.5 670.8,442.5 598.3,430.0"/><polyline points="755.0,529.2 699.2,516.7 661.7,508.3 598.3,504.2"/><polyline points="744.2,588.7 670.0,582.5 617.5,577.0 598.0,575.0"/><polyline points="1057.0,505.3 1055.8,565.0 1055.0,627.0 1052.5,667.5 1050.0,719.5 1050.0,792.0 1050.0,871.7 1052.6,974.0"/><polyline points="1000.8,391.3 1002.5,435.0 1011.7,505.3 1009.2,565.0 1005.8,629.7 1000.8,670.3 994.2,720.8 996.7,795.0 997.5,872.5 1001.9,974.0"/><polyline points="925.8,634.2 927.5,673.0 930.8,725.3 935.0,794.7 938.3,872.0"/><polyline points="939.9,956.8 939.9,974.0"/><polyline points="870.0,669.2 876.7,684.7 877.5,735.8 883.3,791.3 885.0,870.8 888.0,974.0"/><polyline points="808.3,675.8 812.5,696.7 816.7,739.2"/><polyline points="766.7,657.5 765.0,671.7 769.2,717.5 771.7,778.7 775.0,864.2 778.5,974.0"/><polyline points="740.8,588.3 735.8,645.8 732.5,697.5 732.5,773.3 729.2,860.8 727.5,974.0"/><polyline points="705.8,366.3 704.2,409.2 700.8,452.5 699.2,516.7 696.7,581.7 694.2,638.3 691.7,710.0 690.0,769.2 686.7,858.3 684.0,974.0"/><polyline points="665.8,378.3 665.0,441.7 661.7,508.3 659.5,579.0"/><polyline points="670.0,582.5 670.8,634.7 670.0,687.5 665.8,767.2 665.8,857.5 664.5,974.0"/><polyline points="710.0,366.3 691.7,407.5 670.8,442.5"/><polyline points="809.4,674.7 812.0,697.0 817.0,739.0 822.0,790.0 827.5,867.7 837.4,974.0"/></g></g><line x1="111.5" y1="312.4" x2="533" y2="312.4" stroke="#d8a070" stroke-width=".8"/><line x1="651" y1="312.4" x2="1072" y2="312.4" stroke="#d0d870" stroke-width=".8"/><line x1="96" y1="974.2" x2="599" y2="974.2" stroke="#d8c468" stroke-width=".8"/><line x1="599" y1="974.2" x2="1101.5" y2="974.2" stroke="#e0e0e0" stroke-width=".8"/><line x1="1101.3" y1="531" x2="1101.3" y2="974" stroke="#d8d8d8" stroke-width=".7"/><polygon points="1172.5,691.0 1166.5,735.0 1159.0,810.0 1150.0,893.3 1160.0,893.0 1172.5,890.8" fill="#aab254"/><g clip-path="url(#cs)" stroke="#1a1c08" stroke-width=".8" fill="none"><path d="M1150 795.600h24M1150 841.700h24M1150 873.300h24"/><path d="M1168 700L1164 893" stroke-opacity=".35"/><path d="M1172.500 691L1150 893.300" stroke="#d0d870" stroke-width="1.500"/></g><g fill="#fe0000" stroke="none"><polygon points="572.6,392 578.6,391 601.5,968 598.5,973 595.3,968"/><polygon points="575.3,383.800 584.800,394.600 583.500,396.800 565.600,397.500 564.800,395.200"/><polygon points="595.800,556 601.200,556 601.500,969 598.500,973 595.800,969"/></g><path d="M591.300 562.700L598.400 553.600 605.500 562" fill="none" stroke="#fe0000" stroke-width="2.800" stroke-linecap="round" stroke-linejoin="round"/><text x="0" y="0" font-family="'DejaVu Sans','Liberation Sans',sans-serif" font-weight="bold" font-size="38" fill="#fe0000" transform="translate(575 376.5) rotate(13) scale(1.32 1.06)">?</text><rect x="1112.200" y="159.100" width="276.400" height="276.100" rx="8" fill="#fff"/><rect x="1121" y="168.300" width="259" height="257.800" fill="#000"/><g clip-path="url(#cal)"><rect x="1150" y="160" width="167.500" height="275" fill="#6c6c6c"/><g clip-path="url(#cal2)"><g transform="rotate(18 1255 297)"><rect x="1100" y="100" width="320" height="420" filter="url(#fal)"/></g></g><rect x="1148" y="160" width="45" height="275" fill="#6a6a6a" opacity=".8"/><g filter="url(#bl3)"><ellipse cx="1213" cy="224" rx="9" ry="12" fill="#101010" opacity="0.59" transform="rotate(20 1213 224)"/><ellipse cx="1219" cy="264" rx="9" ry="13" fill="#101010" opacity="0.52" transform="rotate(20 1219 264)"/><ellipse cx="1244" cy="175" rx="9" ry="9" fill="#101010" opacity="0.49" transform="rotate(20 1244 175)"/><ellipse cx="1253" cy="364" rx="9" ry="20" fill="#101010" opacity="0.62" transform="rotate(20 1253 364)"/><ellipse cx="1234" cy="312" rx="10" ry="12" fill="#101010" opacity="0.52" transform="rotate(20 1234 312)"/><ellipse cx="1271" cy="270" rx="9" ry="16" fill="#101010" opacity="0.45" transform="rotate(20 1271 270)"/><ellipse cx="1289" cy="334" rx="8" ry="14" fill="#101010" opacity="0.42" transform="rotate(20 1289 334)"/><ellipse cx="1222" cy="383" rx="8" ry="10" fill="#101010" opacity="0.45" transform="rotate(20 1222 383)"/><ellipse cx="1259" cy="412" rx="9" ry="9" fill="#101010" opacity="0.45" transform="rotate(20 1259 412)"/><ellipse cx="1296" cy="215" rx="6" ry="16" fill="#101010" opacity="0.33" transform="rotate(20 1296 215)"/><ellipse cx="1262" cy="215" rx="7" ry="10" fill="#101010" opacity="0.33" transform="rotate(20 1262 215)"/><ellipse cx="1240" cy="395" rx="6" ry="8" fill="#101010" opacity="0.33" transform="rotate(20 1240 395)"/><ellipse cx="1222" cy="197" rx="14" ry="11" fill="#d8d8d8" opacity="0.68" transform="rotate(20 1222 197)"/><ellipse cx="1229" cy="344" rx="14" ry="10" fill="#d8d8d8" opacity="0.72" transform="rotate(20 1229 344)"/><ellipse cx="1281" cy="190" rx="12" ry="12" fill="#d8d8d8" opacity="0.40" transform="rotate(20 1281 190)"/><ellipse cx="1284" cy="292" rx="10" ry="14" fill="#d8d8d8" opacity="0.36" transform="rotate(20 1284 292)"/><ellipse cx="1212" cy="298" rx="8" ry="9" fill="#d8d8d8" opacity="0.32" transform="rotate(20 1212 298)"/><ellipse cx="1272" cy="380" rx="9" ry="12" fill="#d8d8d8" opacity="0.32" transform="rotate(20 1272 380)"/><ellipse cx="1244" cy="250" rx="8" ry="9" fill="#d8d8d8" opacity="0.28" transform="rotate(20 1244 250)"/></g><g filter="url(#bl5)"><ellipse cx="1172" cy="230" rx="6" ry="40" fill="#888" opacity=".35"/><ellipse cx="1180" cy="350" rx="6" ry="45" fill="#444" opacity=".35"/><ellipse cx="1168" cy="400" rx="5" ry="30" fill="#888" opacity=".3"/></g><rect x="1150" y="160" width="167.500" height="275" fill="url(#hat)"/><rect x="1146" y="160" width="26" height="275" fill="url(#afade)"/><rect x="1191.500" y="160" width="1.500" height="275" fill="#3c3c3c"/><rect x="1193.300" y="160" width="2.600" height="275" fill="#8e8e8e"/><line x1="1198.500" y1="160" x2="1198.500" y2="435" stroke="#484848" stroke-opacity=".7" stroke-width="1.200" stroke-dasharray="2 2.500"/><rect x="1306" y="160" width="11.500" height="275" fill="#8a8a8a" opacity=".75"/><line x1="1309.500" y1="160" x2="1309.500" y2="435" stroke="#585858" stroke-opacity=".7" stroke-width="1.300" stroke-dasharray="2 2.500"/><rect x="1316" y="160" width="2.500" height="275" fill="#222"/></g><text x="1131" y="415.500" font-family="'Liberation Sans',sans-serif" font-size="17.500" font-weight="normal" fill="#fff">Alpha</text><rect x="1320" y="147" width="5.600" height="296.500" rx="2.500" fill="#fe0000"/><path d="M1322.800 136.500L1335 148.500Q1336 152.500 1331.500 151.200L1322.800 147.500 1313.500 151.500Q1307.500 152.500 1309.500 148.500z" fill="#fe0000"/><circle cx="1196.500" cy="518.300" r="64.200" fill="none" stroke="#b81420" stroke-width="1.150"/><circle cx="1196.500" cy="518.300" r="32.200" fill="none" stroke="#7c1a22" stroke-width="1.200"/></svg>
<div class="t" style="left:-1.500px;top:1050.300px;color:#cfcfcf">del Opacity 100</div>
<div class="sl" style="left:0;top:1063px;width:75px;background:#555"></div>
<div class="th" style="left:75px;top:1061.300px;width:14px"></div>
<div class="b b2" style="left:125.5px;top:1048.7px;width:77.5px;height:17.6px;line-height:16.0px;">Double</div>
<div class="t" style="left:267.500px;top:1052px;color:#cfcfcf">Opacity 100</div>
<div class="a" style="left:264.500px;top:1063.300px;width:157px;height:3.400px;border-radius:2px;background:#f07a0a"></div>
<div class="a" style="left:549px;top:1074.500px;width:128px;height:5.500px;background:#454545;background-image:repeating-linear-gradient(90deg,rgba(0,0,0,.35) 0 1px,transparent 1px 2px),repeating-linear-gradient(0deg,rgba(0,0,0,.3) 0 1px,transparent 1px 2px)"></div>
<div class="a" style="left:599px;top:1074px;width:26px;height:6px;background:#232323"></div>
<svg class="a" style="left:599px;top:1074px" width="26" height="6" viewBox="0 0 26 6"><path d="M1 6l6-5.500 6 5.500z" fill="#555"/><path d="M12.500 .5h12l-6 5.500z" fill="#4a4a4a"/></svg>
</div>
</body></html>
